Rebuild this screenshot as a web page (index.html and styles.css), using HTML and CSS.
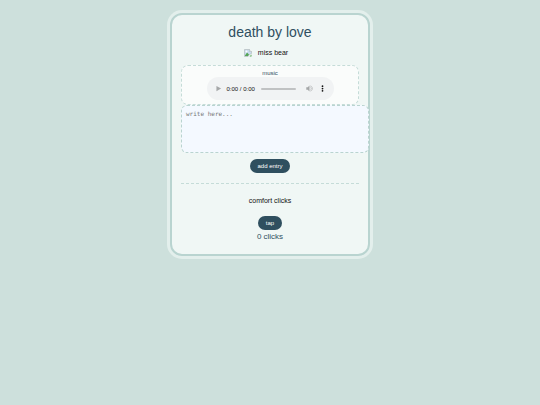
FILE: index.html
```
<!DOCTYPE html>
<html lang="en">
<head>
  <meta charset="UTF-8">
  <meta name="viewport" content="width=device-width, initial-scale=1.0">
  <title>death by love</title>
  <link rel="stylesheet" href="styles.css">
</head>
<body>

  <main class="container">
    <h1>death by love</h1>

    <div class="bear">
      <svg class="bear-icon" viewBox="0 0 16 16" aria-hidden="true">
        <path d="M1 1h10l4 4v4l-4 2-3 4H1z" fill="#c9dcf0" stroke="#a3aaa9"/>
        <path d="M11 1v4h4" fill="#fff" stroke="#a3aaa9"/>
        <path d="M2 13l4-6 4 4-2 3H2z" fill="#55a555"/>
        <path d="M11 15l4-4v4z" fill="#55a555"/>
        <circle cx="5" cy="5" r="2" fill="#fff"/>
      </svg>
      <span>miss bear</span>
    </div>

    <section class="music">
      <h2>music</h2>
      <div class="player">
        <button class="player-btn" type="button" aria-label="play">
          <svg viewBox="0 0 24 24"><path d="M5 3v18l16-9z" fill="#a5a7a8"/></svg>
        </button>
        <span class="time">0:00 / 0:00</span>
        <input class="seek" type="range" min="0" max="100" value="0" aria-label="seek" disabled>
        <button class="player-btn" type="button" aria-label="mute">
          <svg viewBox="0 0 24 24" fill="#a5a7a8"><path d="M1 8v8h5l6 6V2L6 8z"/><path d="M15 7c4 2 4 8 0 10M15 3c9 2 9 16 0 18" fill="none" stroke="#a5a7a8" stroke-width="2"/></svg>
        </button>
        <button class="player-btn" type="button" aria-label="more options">
          <svg viewBox="0 0 24 24" fill="#111"><circle cx="12" cy="4" r="3"/><circle cx="12" cy="12" r="3"/><circle cx="12" cy="20" r="3"/></svg>
        </button>
      </div>
    </section>

    <textarea class="entry" id="entry" aria-label="write here" placeholder="write here..."></textarea>
    <button class="btn" id="addEntry" type="button">add entry</button>

    <section class="comfort">
      <p>comfort clicks</p>
      <button class="btn" id="tap" type="button">tap</button>
      <div class="count"><span id="clicks">0</span> clicks</div>
    </section>
  </main>

  <script>
    let clicks = 0;
    document.getElementById('tap').addEventListener('click', function() {
      clicks++;
      document.getElementById('clicks').textContent = clicks;
    });
  </script>

</body>
</html>
```
FILE: styles.css
```
body {
  margin: 0;
  padding: 13px;
  background-color: #cde0dc;
  color: #111;
  font-family: "Liberation Sans", Arial, sans-serif;
  font-size: 7px;
  line-height: 8px;
}
.container {
  box-sizing: border-box;
  max-width: 200px;
  margin: auto;
  padding: 10px 9px;
  background-color: #f0f7f5;
  border: 2px solid #b9d4d0;
  border-radius: 12px;
  box-shadow: 0 0 0 3px #e3efec;
  text-align: center;
}
h1 {
  margin: 0 0 9px;
  color: #2f4f5f;
  font-size: 14px;
  font-weight: normal;
  line-height: 15px;
}
.bear {
  display: flex;
  justify-content: center;
  align-items: center;
  gap: 6px;
  margin-bottom: 8px;
  padding-right: 8px;
}
.bear-icon {
  width: 8px;
  height: 8px;
}
.music {
  padding: 4px 10px;
  background-color: #fafcfb;
  border: 1px dashed #c5dcd8;
  border-radius: 7px;
}
h2 {
  margin: 0;
  color: #2f4f5f;
  font-size: 6px;
  font-weight: normal;
  line-height: 7px;
}
.player {
  display: flex;
  align-items: center;
  box-sizing: border-box;
  max-width: 127px;
  height: 23px;
  margin: auto;
  padding: 0 8px;
  background-color: #f1f3f4;
  border-radius: 12px;
}
.player-btn {
  display: flex;
  flex: none;
  padding: 0;
  background: none;
  border: none;
  cursor: pointer;
}
.player-btn + .player-btn {
  margin-left: 6px;
}
.player-btn svg {
  width: 7px;
  height: 7px;
}
.time {
  margin: 0 6px 0 5px;
  font-size: 6px;
  white-space: nowrap;
}
.seek {
  flex: 1;
  min-width: 0;
  height: 2px;
  margin: 0 10px 0 0;
  appearance: none;
  background-color: #c0c2c3;
  border-radius: 1px;
}
.seek::-webkit-slider-thumb {
  appearance: none;
  width: 0;
  height: 0;
}
.entry {
  display: block;
  width: 100%;
  height: 38px;
  padding: 4px;
  background-color: #f4f9ff;
  border: 1px dashed #b9d4d0;
  border-radius: 6px;
  color: #2f4f5f;
  font-family: "DejaVu Sans Mono", monospace;
  font-size: 6px;
  line-height: 7px;
  resize: none;
}
.entry::placeholder {
  color: #757575;
}
.btn {
  display: block;
  min-width: 24px;
  margin: 6px auto 0;
  padding: 3px 7px;
  background-color: #2f4f5f;
  border: none;
  border-radius: 7px;
  color: #fff;
  font-family: inherit;
  font-size: 6px;
  line-height: 8px;
  cursor: pointer;
}
.comfort {
  margin-top: 10px;
  padding-top: 13px;
  border-top: 1px dashed #c5dcd8;
}
.comfort p {
  margin: 0 0 11px;
}
.count {
  margin-top: 2px;
  padding-bottom: 3px;
  color: #2f4f5f;
  font-size: 8px;
  line-height: 9px;
}
```
